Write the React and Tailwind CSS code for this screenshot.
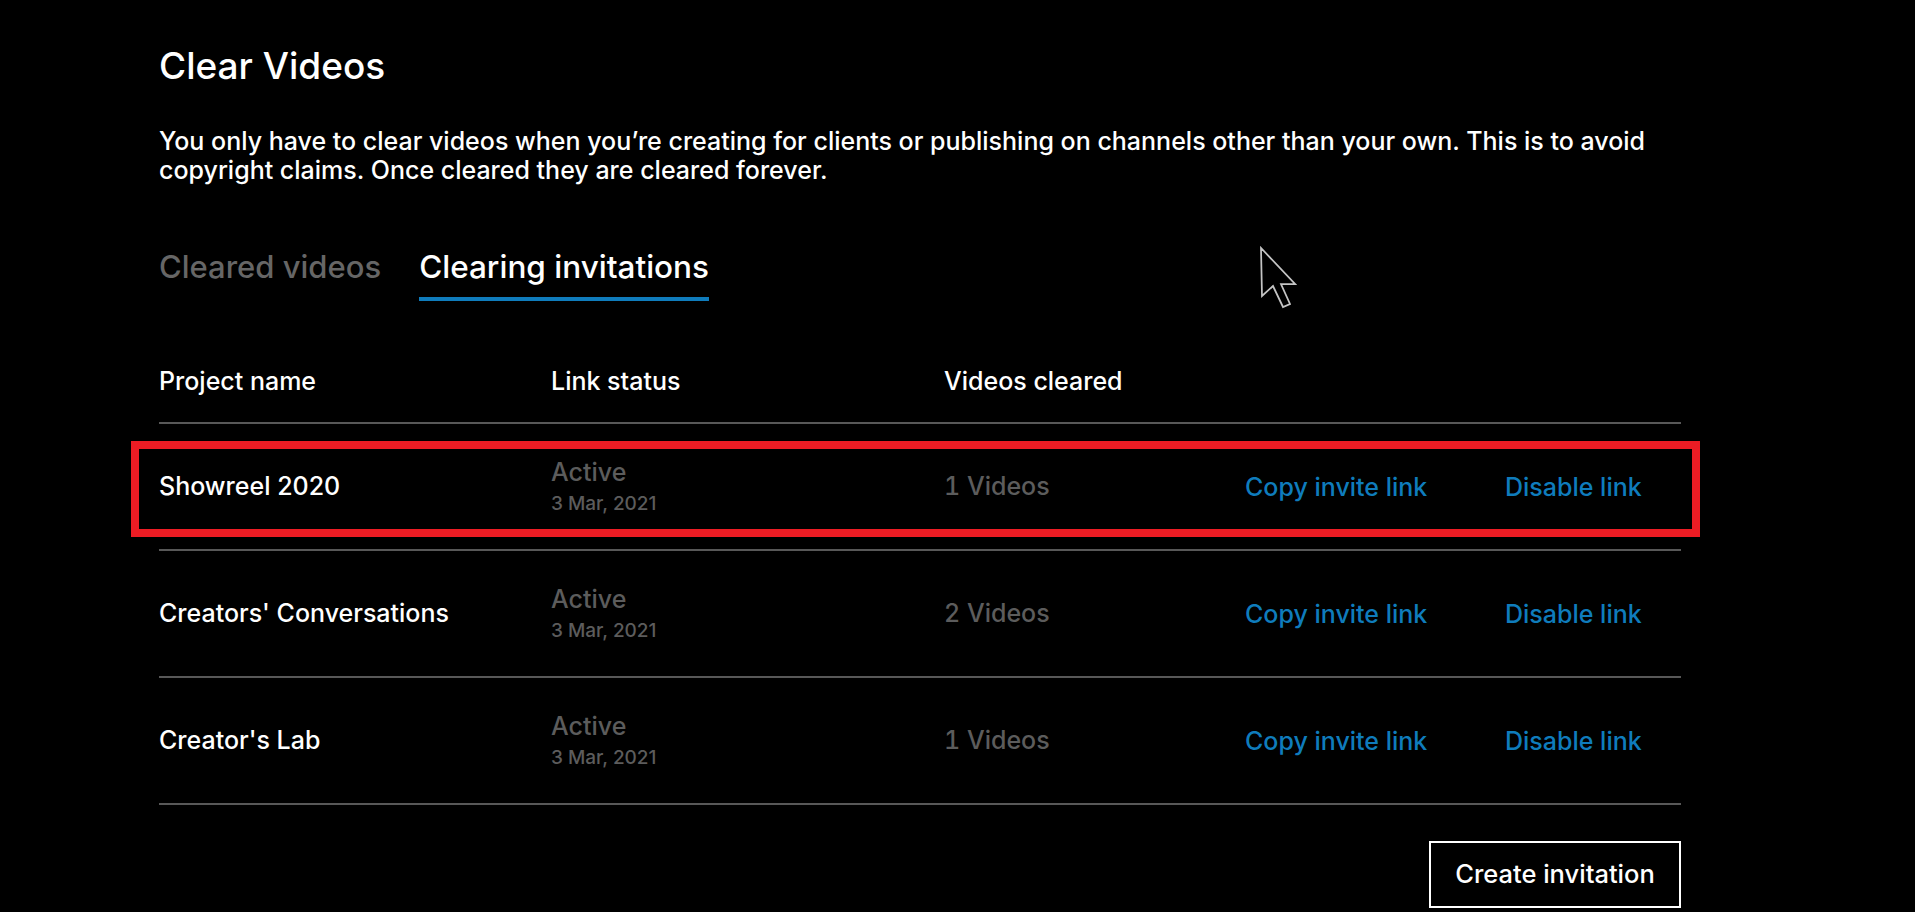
const rows = [
  { name: "Showreel 2020", count: "1 Videos", marked: true },
  { name: "Creators' Conversations", count: "2 Videos" },
  { name: "Creator's Lab", count: "1 Videos" },
];

function Row({ name, count, marked }) {
  return (
    <div className="relative grid h-[127px] grid-cols-[392px_393px_301px_260px_1fr] items-center border-b-2 border-[#585858] text-[25px] font-medium">
      <div className="text-white">{name}</div>
      <div className="pb-[3px]">
        <div className="text-[25px] leading-[30px] text-[#5c5c5c]">Active</div>
        <div className="mt-[7px] text-[19px] leading-[20px] text-[#5c5c5c]">3 Mar, 2021</div>
      </div>
      <div className="text-[#5c5c5c] tabular-nums">{count}</div>
      <a className="pt-[2px] text-[#0f7cbc]">Copy invite link</a>
      <a className="pt-[2px] text-[#0f7cbc]">Disable link</a>
      {/* Red highlight drawn over the first row */}
      {marked && (
        <div className="absolute top-[17px] -right-[19px] bottom-[12px] -left-[28px] border-8 border-[#ed1c24]" />
      )}
    </div>
  );
}

export default function App() {
  return (
    <main className="relative h-[912px] overflow-hidden bg-black pt-[44px] pl-[159px] font-['Inter',sans-serif]">
      <div className="w-[1522px]">
        <h1 className="text-[37px] leading-[44px] font-medium text-white">Clear Videos</h1>

        <p className="mt-[39px] text-[25px] leading-[29px] font-medium text-white">
          You only have to clear videos when you’re creating for clients or publishing on channels other than your own. This is to avoid
          <br />
          copyright claims. Once cleared they are cleared forever.
        </p>

        {/* Tabs */}
        <div className="mt-[64px] flex gap-[38px] text-[31px] leading-[36px] font-medium">
          <div className="text-[#666666]">Cleared videos</div>
          <div className="border-b-4 border-[#0f7cbc] pb-[12px] text-[31.5px] text-white">Clearing invitations</div>
        </div>

        {/* Table head */}
        <div className="mt-[66px] grid h-[57px] grid-cols-[392px_393px_1fr] border-b-2 border-[#585858] text-[25px] leading-[28px] font-medium text-white">
          <div>Project name</div>
          <div>Link status</div>
          <div>Videos cleared</div>
        </div>

        {rows.map((row) => (
          <Row key={row.name} {...row} />
        ))}

        <div className="mt-[36px] flex justify-end">
          <button className="h-[67px] w-[252px] border-2 border-white text-[25.5px] font-medium text-white">Create invitation</button>
        </div>
      </div>

      {/* Mouse pointer */}
      <svg className="absolute top-[246px] left-[1259px]" width="38" height="64" viewBox="0 0 38 64" fill="#000" stroke="#c4c4c4" strokeWidth="1.75">
        <path d="M2 2 L3 50 L14 40 L24 61 L31 58 L22 38 L36 38 Z" />
      </svg>
    </main>
  );
}
